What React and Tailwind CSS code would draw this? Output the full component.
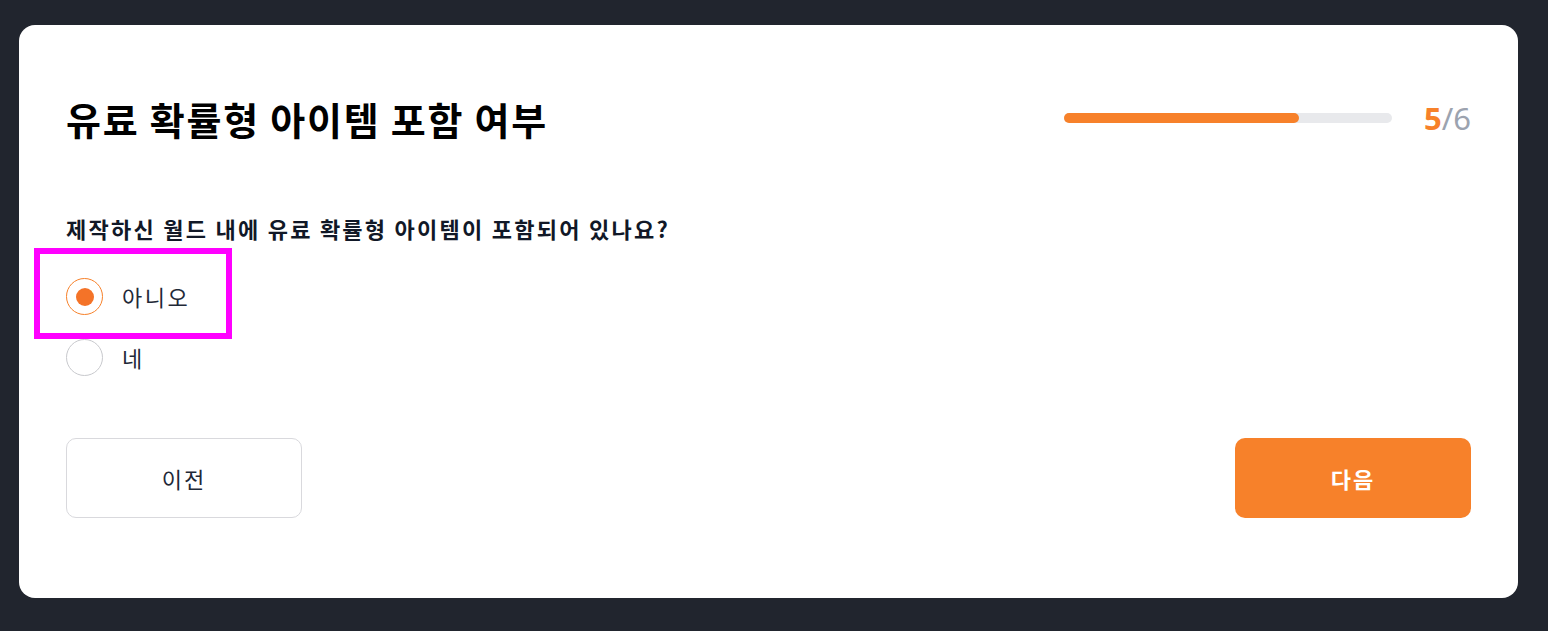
import React, { useState } from 'react';

const font = { fontFamily: '"Noto Sans CJK KR", "Noto Sans CJK JP", sans-serif' };

function Radio({ checked, label, onClick, highlight }) {
  return (
    <div className="relative flex items-center h-[37px] cursor-pointer" onClick={onClick}>
      {highlight && (
        <div className="absolute left-[-32px] top-[-30px] w-[198px] h-[91px] border-[6px] border-[#ff00ff] pointer-events-none" />
      )}
      <span
        className={
          'flex items-center justify-center w-[37px] h-[37px] rounded-full border-[1.5px] ' +
          (checked ? 'border-[#f7812a]' : 'border-[#c8c9cd]')
        }
      >
        {checked && <span className="w-[18px] h-[18px] rounded-full bg-[#f47328]" />}
      </span>
      <span className="ml-[19px] text-[22px] tracking-[2.5px] text-[#1f2937]">{label}</span>
    </div>
  );
}

export default function App() {
  const [choice, setChoice] = useState('no');

  return (
    <div className="min-h-screen bg-[#21252e] pt-[25px] pl-[19px] pr-[30px]" style={font}>
      <div className="bg-white rounded-2xl h-[573px] px-[47px] pt-[68px]">
        {/* header */}
        <div className="flex items-center justify-between h-[50px]">
          <h1 className="text-[38px] font-bold tracking-[1.75px] text-black">유료 확률형 아이템 포함 여부</h1>
          <div className="flex items-center">
            <div className="w-[328px] h-[10px] rounded-full bg-[#e8e9ec]">
              <div className="w-[235px] h-full rounded-full bg-[#f7812a]" />
            </div>
            <div className="ml-[32px] text-[31px] leading-none" style={{ fontFamily: '"Noto Sans", sans-serif' }}>
              <span className="font-bold text-[#f7812a]">5</span>
              <span className="text-[#9ca3af]">/6</span>
            </div>
          </div>
        </div>

        {/* question */}
        <p className="mt-[71px] text-[22px] leading-[28px] font-bold tracking-[2.25px] text-[#111827]">
          제작하신 월드 내에 유료 확률형 아이템이 포함되어 있나요?
        </p>

        <div className="mt-[36px] flex flex-col gap-[24px]">
          <Radio checked={choice === 'no'} label="아니오" onClick={() => setChoice('no')} highlight />
          <Radio checked={choice === 'yes'} label="네" onClick={() => setChoice('yes')} />
        </div>

        {/* buttons */}
        <div className="mt-[62px] flex justify-between">
          <button className="w-[236px] h-[80px] rounded-[10px] border border-[#d9d9dd] bg-white text-[22px] tracking-[2px] text-[#1f2937]">
            이전
          </button>
          <button className="w-[236px] h-[80px] rounded-[10px] bg-[#f7812a] text-[22px] font-bold tracking-[2px] text-white">
            다음
          </button>
        </div>
      </div>
    </div>
  );
}
